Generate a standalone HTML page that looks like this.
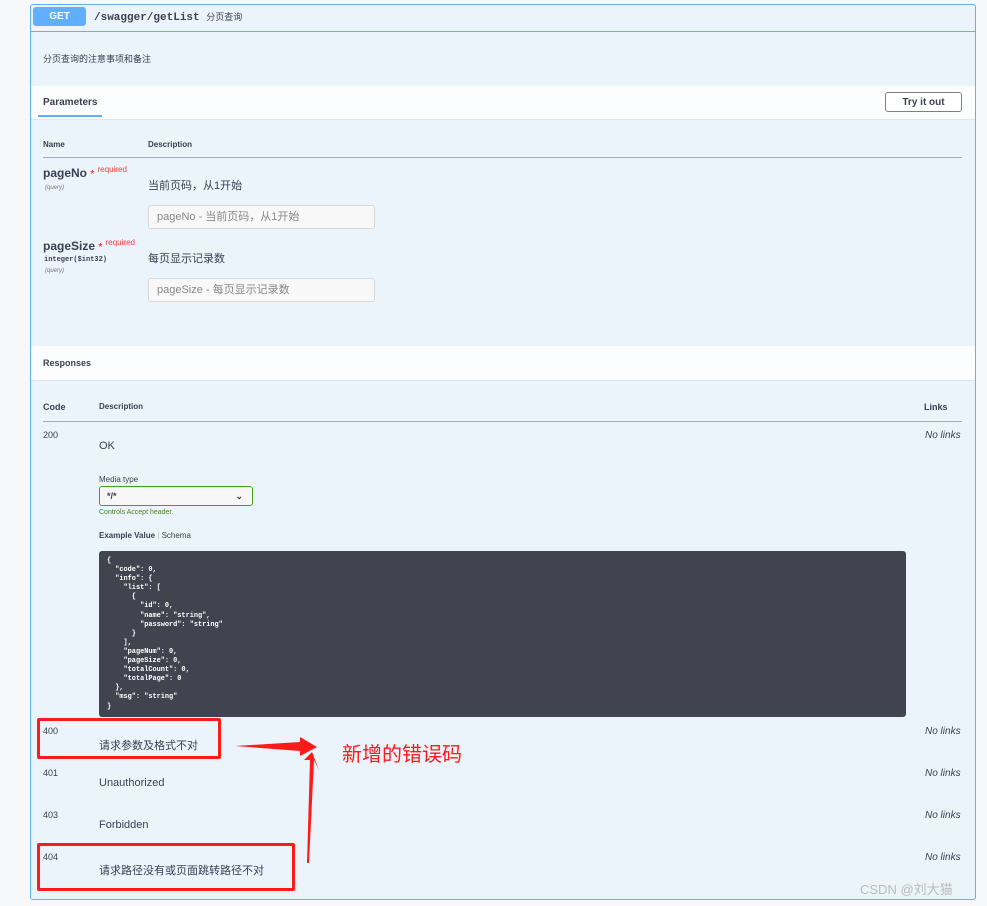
<!DOCTYPE html>
<html><head><meta charset="utf-8"><style>
body{margin:0;width:987px;height:906px;background:#f7f8fa;font-family:"Liberation Sans","Noto Sans CJK SC",sans-serif;color:#3b4151;position:relative;overflow:hidden}
.a{position:absolute;white-space:nowrap}
.box{position:absolute;left:30px;top:4px;width:944px;height:894px;border:1px solid #61affe;border-radius:3px;background:#ebf3fb}
.m{font-family:"Liberation Mono","Noto Sans CJK SC",monospace}
.nl{font-style:italic;font-size:10px;color:#3b4151;left:925px}
.red{position:absolute;border:3px solid #ff1a1a;border-radius:2px}
</style></head><body>
<div class="box"></div>
<div class="a" style="left:31px;top:31px;width:944px;height:1px;background:#61affe"></div>
<div class="a" style="left:33px;top:7px;width:53px;height:19px;background:#61affe;border-radius:3px;color:#fff;font-weight:bold;font-size:10px;text-align:center;line-height:20px">GET</div>
<div class="a m" style="left:94px;top:10px;font-size:11px;font-weight:bold">/swagger/getList <span style="font-family:'Noto Sans CJK SC',sans-serif;font-weight:normal;font-size:9px">分页查询</span></div>
<div class="a" style="left:43px;top:52px;font-size:9px">分页查询的注意事项和备注</div>
<div class="a" style="left:31px;top:86px;width:944px;height:33px;background:#fcfdfe;border-bottom:1px solid #dde6ef"></div>
<div class="a" style="left:43px;top:97px;font-size:10px;font-weight:bold">Parameters</div>
<div class="a" style="left:38px;top:115px;width:64px;height:2px;background:#61affe"></div>
<div class="a" style="left:885px;top:92px;width:75px;height:18px;border:1px solid #808080;border-radius:3px;background:#fff;font-size:10px;font-weight:bold;text-align:center;line-height:20px">Try it out</div>
<div class="a" style="left:43px;top:140px;font-size:8px;font-weight:bold">Name</div>
<div class="a" style="left:148px;top:140px;font-size:8px;font-weight:bold">Description</div>
<div class="a" style="left:43px;top:157px;width:919px;height:1px;background:#a8adb5"></div>
<div class="a" style="left:43px;top:166px;font-size:12px;font-weight:bold">pageNo <span style="color:#f93e3e;font-size:10px">*</span> <span style="color:#f93e3e;font-size:8px;position:relative;top:-5px;font-weight:normal">required</span></div>
<div class="a" style="left:45px;top:185px;font-size:6px;font-style:italic;color:#777">(query)</div>
<div class="a" style="left:148px;top:177px;font-size:11px">当前页码，从1开始</div>
<div class="a" style="left:148px;top:205px;width:225px;height:22px;border:1px solid #d9d9d9;border-radius:3px;background:#f8f8f8;font-size:11px;color:#888;line-height:22px;text-indent:8px">pageNo - 当前页码，从1开始</div>
<div class="a" style="left:43px;top:239px;font-size:12px;font-weight:bold">pageSize <span style="color:#f93e3e;font-size:10px">*</span> <span style="color:#f93e3e;font-size:8px;position:relative;top:-5px;font-weight:normal">required</span></div>
<div class="a m" style="left:44px;top:256px;font-size:7px;font-weight:bold">integer($int32)</div>
<div class="a" style="left:45px;top:268px;font-size:6px;font-style:italic;color:#777">(query)</div>
<div class="a" style="left:148px;top:250px;font-size:11px">每页显示记录数</div>
<div class="a" style="left:148px;top:278px;width:225px;height:22px;border:1px solid #d9d9d9;border-radius:3px;background:#f8f8f8;font-size:11px;color:#888;line-height:22px;text-indent:8px">pageSize - 每页显示记录数</div>
<div class="a" style="left:31px;top:346px;width:944px;height:34px;background:#fcfdfe;border-bottom:1px solid #dde6ef"></div>
<div class="a" style="left:43px;top:358px;font-size:9px;font-weight:bold">Responses</div>
<div class="a" style="left:43px;top:402px;font-size:9px;font-weight:bold">Code</div>
<div class="a" style="left:99px;top:402px;font-size:8px;font-weight:bold">Description</div>
<div class="a" style="left:924px;top:402px;font-size:9px;font-weight:bold">Links</div>
<div class="a" style="left:43px;top:421px;width:919px;height:1px;background:#a8adb5"></div>
<div class="a" style="left:43px;top:430px;font-size:9px">200</div>
<div class="a" style="left:99px;top:440px;font-size:11px">OK</div>
<div class="a nl" style="top:430px">No links</div>
<div class="a" style="left:99px;top:475px;font-size:8px">Media type</div>
<div class="a" style="left:99px;top:486px;width:152px;height:18px;border:1px solid #41a317;border-radius:3px;background:#f7f7f7;font-size:9px;line-height:18px;text-indent:7px;font-weight:bold">*/*<span style="position:absolute;right:9px;top:0;font-size:9px">&#8964;</span></div>
<div class="a" style="left:99px;top:509px;font-size:7px;color:#4a7f2a">Controls Accept header.</div>
<div class="a" style="left:99px;top:531px;font-size:8px"><b>Example Value</b> <span style="color:#bbb">|</span> Schema</div>
<pre class="a m" style="white-space:pre;box-sizing:border-box;left:99px;top:551px;width:807px;height:166px;margin:0;padding:6px 8px;background:#41444e;border-radius:3px;color:#fff;font-size:6.9px;line-height:9.1px;font-weight:bold">{
  "code": 0,
  "info": {
    "list": [
      {
        "id": 0,
        "name": "string",
        "password": "string"
      }
    ],
    "pageNum": 0,
    "pageSize": 0,
    "totalCount": 0,
    "totalPage": 0
  },
  "msg": "string"
}</pre>
<div class="a" style="left:43px;top:726px;font-size:9px">400</div>
<div class="a" style="left:99px;top:737px;font-size:11px">请求参数及格式不对</div>
<div class="a nl" style="top:726px">No links</div>
<div class="a" style="left:43px;top:768px;font-size:9px">401</div>
<div class="a" style="left:99px;top:777px;font-size:11px">Unauthorized</div>
<div class="a nl" style="top:768px">No links</div>
<div class="a" style="left:43px;top:810px;font-size:9px">403</div>
<div class="a" style="left:99px;top:819px;font-size:11px">Forbidden</div>
<div class="a nl" style="top:810px">No links</div>
<div class="a" style="left:43px;top:852px;font-size:9px">404</div>
<div class="a" style="left:99px;top:862px;font-size:11px">请求路径没有或页面跳转路径不对</div>
<div class="a nl" style="top:852px">No links</div>
<div class="red" style="left:37px;top:718px;width:178px;height:35px"></div>
<div class="red" style="left:37px;top:843px;width:252px;height:42px"></div>
<svg class="a" style="left:230px;top:730px" width="100" height="135">
<polygon points="5,16 70,12 70,7 87,17 70,26 70,21" fill="#ff1a1a"/>
<polygon points="77,133 80,30 74,30 82,22 89,40 84,30 79,133" fill="#ff1a1a"/>
</svg>
<div class="a" style="left:342px;top:738px;font-size:20px;color:#ff1a1a;font-family:'Noto Sans CJK SC',sans-serif">新增的错误码</div>
<div class="a" style="left:860px;top:879px;font-size:13px;color:#bbb">CSDN @刘大猫</div>
</body></html>
